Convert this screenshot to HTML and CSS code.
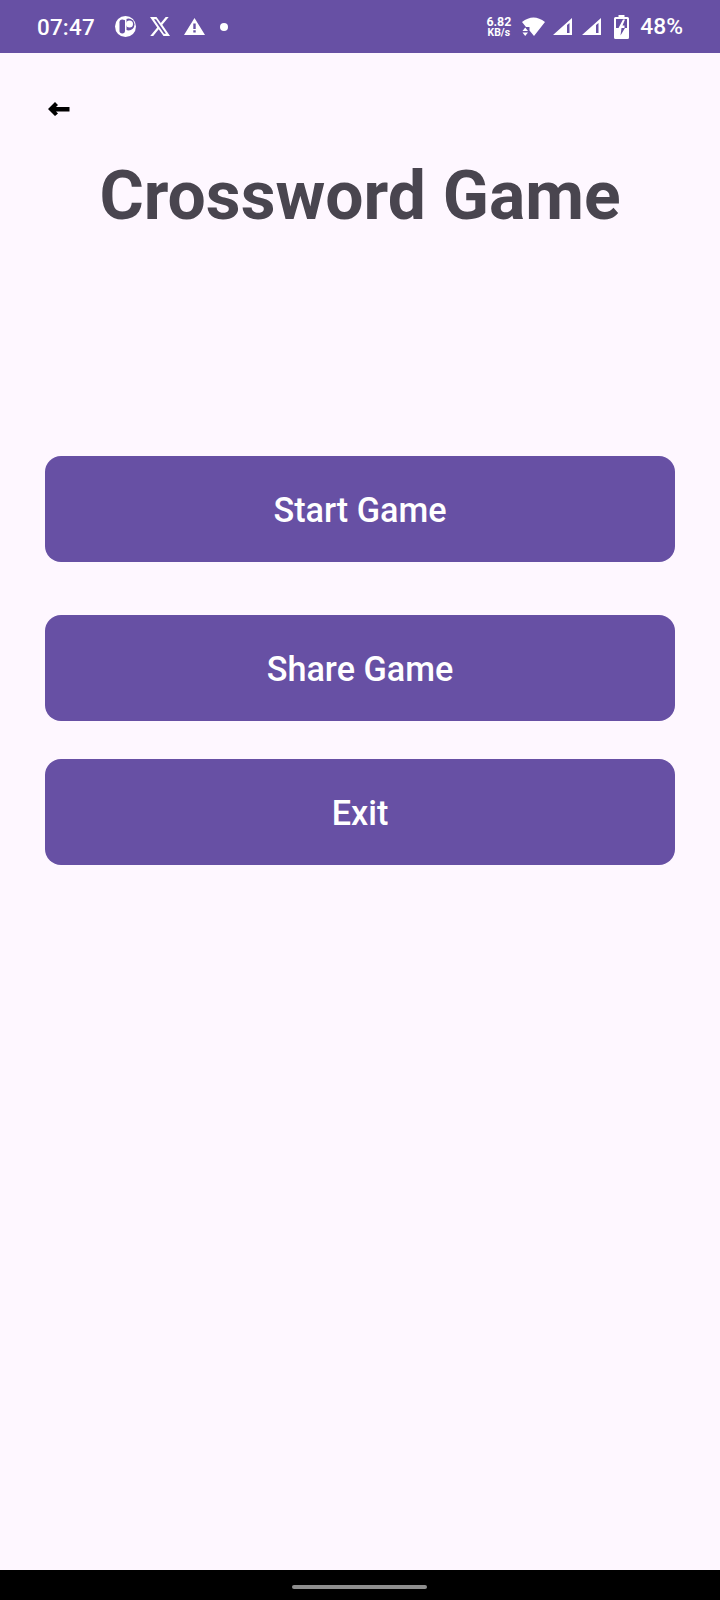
FILE: index.html
```html
<!DOCTYPE html>
<html lang="en">
<head>
    <meta charset="UTF-8">
    <meta name="viewport" content="width=device-width, initial-scale=1.0">
    <title>Crossword Game</title>
    <link rel="stylesheet" href="styles.css">
</head>
<body>
    <div class="phone">
        <header class="status-bar">
            <div class="status-left">
                <span class="clock">07:47</span>
                <svg class="icon-app" width="21" height="21" viewBox="0 0 21 21">
                    <circle cx="10.5" cy="10.500" r="10.500" fill="#fff"/>
                    <circle cx="13.500" cy="8.500" r="6" fill="#6750a4"/>
                    <rect x="4.500" y="3.500" width="5.500" height="14" rx="2.700" fill="#6750a4"/>
                    <rect x="10" y="3" width="1.500" height="15" fill="#fff"/>
                    <circle cx="14.500" cy="8" r="3.500" fill="#fff"/>
                </svg>
                <svg class="icon-x" width="20" height="19" viewBox="0 0 20 19">
                    <path fill="#fff" fill-rule="evenodd" d="M0 0h6.500l4.300 6 4.900-6h3l-6.400 7.800 7.700 11.200h-6.500l-4.800-6.800-5.500 6.800h-3l7-8.500zM4 2.200l10 14.600h2l-10-14.600z"/>
                </svg>
                <svg class="icon-warn" width="21" height="17" viewBox="0 0 21 17">
                    <path fill="#fff" fill-rule="evenodd" d="M10.500 0l10.500 17h-21zM9.300 5.500v5.500h2.400V5.500zM9.300 12.300v2.300h2.400v-2.300z"/>
                </svg>
                <span class="dot"></span>
            </div>
            <div class="status-right">
                <div class="speed"><span>6.82</span><span class="speed-unit">KB/s</span></div>
                <svg class="icon-wifi" width="23" height="19" viewBox="0 0 23 19">
                    <path fill="#fff" d="M0 5Q11.500-4 23 5L12 19 7.500 13.500V10H4z"/>
                    <path fill="#fff" d="M3.200 10.500L6 14H0.500zM0.500 15.500H6L3.200 19z"/>
                </svg>
                <svg class="icon-signal" width="19" height="17" viewBox="0 0 19 17">
                    <path fill="#fff" fill-rule="evenodd" d="M0 17L19 0V17zM14 7V15H16.500V5z"/>
                </svg>
                <svg class="icon-signal second" width="19" height="17" viewBox="0 0 19 17">
                    <path fill="#fff" fill-rule="evenodd" d="M0 17L19 0V17zM14 7V15H16.500V5z"/>
                </svg>
                <svg class="icon-battery" width="15" height="24" viewBox="0 0 15 24">
                    <path fill="#fff" d="M4.500 0h6v2h3a1.500 1.500 0 0 1 1.500 1.500v19a1.500 1.500 0 0 1-1.500 1.500h-12a1.500 1.500 0 0 1-1.500-1.500v-19a1.500 1.500 0 0 1 1.500-1.500h3z"/>
                    <rect x="2" y="4" width="11" height="9" fill="#6750a4"/>
                    <path fill="#fff" d="M9 4.500L4.500 13H10.500V10.500H8.500L11 4.500z"/>
                    <path fill="#6750a4" d="M4.500 13H7.500L6.500 20.500L11 13z"/>
                </svg>
                <span class="battery">48%</span>
            </div>
        </header>

        <main class="screen">
            <button class="back" aria-label="Back">
                <svg width="22" height="14" viewBox="0 0 22 14">
                    <path fill="#000" d="M0 7L7 0L10 3L8 5H21.500V9.500H8L10 11.500L7 14z"/>
                </svg>
            </button>
            <h1 class="title">Crossword Game</h1>
            <div class="menu">
                <button class="menu-btn">Start Game</button>
                <button class="menu-btn share">Share Game</button>
                <button class="menu-btn">Exit</button>
            </div>
        </main>

        <footer class="nav-bar">
            <div class="nav-handle"></div>
        </footer>
    </div>
</body>
</html>
```

FILE: styles.css
```css
* {
    box-sizing: border-box;
}
body {
    margin: 0;
    font-family: Roboto, "Liberation Sans", sans-serif;
    background: #fef7ff;
}
.phone {
    display: flex;
    flex-direction: column;
    height: 1600px;
}

/* status bar */
.status-bar {
    height: 53px;
    flex: none;
    background: #6750a4;
    color: white;
    display: flex;
    justify-content: space-between;
    align-items: center;
    padding: 0 37px 0 37px;
}
.status-left, .status-right {
    display: flex;
    align-items: center;
}
.clock {
    font-size: 22.4px;
    font-weight: 500;
    letter-spacing: 0.2px;
}
.icon-app {
    margin-left: 20px;
}
.icon-x {
    margin-left: 14px;
}
.icon-warn {
    margin-left: 14px;
}
.dot {
    width: 8px;
    height: 8px;
    margin-left: 15px;
    border-radius: 50%;
    background: white;
}
.speed {
    display: flex;
    flex-direction: column;
    align-items: center;
    font-size: 12.4px;
    font-weight: 700;
    line-height: 11px;
}
.speed-unit {
    font-size: 10.4px;
}
.icon-wifi {
    margin-left: 11px;
}
.icon-signal {
    margin-left: 8px;
}
.icon-signal.second {
    margin-left: 10px;
}
.icon-battery {
    margin-left: 13px;
}
.battery {
    margin-left: 11px;
    font-size: 22.8px;
    font-weight: 500;
}

/* main screen */
.screen {
    flex: 1;
    padding: 0 45px;
}
.back {
    display: block;
    margin: 49px 0 0 3px;
    padding: 0;
    border: none;
    background: none;
    line-height: 0;
}
.title {
    margin: 40px 0 0;
    font-size: 67.8px;
    font-weight: 700;
    line-height: 80px;
    text-align: center;
    color: #49454f;
}
.menu {
    margin-top: 220px;
    display: flex;
    flex-direction: column;
    gap: 38px;
}
.menu-btn {
    height: 106px;
    padding-top: 2px;
    border: none;
    border-radius: 16px;
    background: #6750a4;
    color: white;
    font-family: inherit;
    font-size: 34.2px;
    font-weight: 500;
}
.share {
    margin-top: 15px;
}

/* nav bar */
.nav-bar {
    height: 30px;
    flex: none;
    background: black;
    display: flex;
    justify-content: center;
    padding-top: 15px;
    padding-right: 1px;
}
.nav-handle {
    width: 135px;
    height: 4px;
    border-radius: 2px;
    background: #8e8e8e;
}
```
